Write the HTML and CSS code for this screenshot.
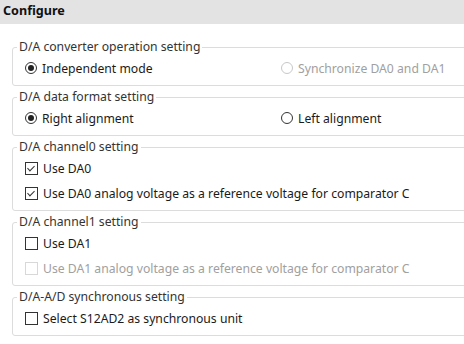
FILE: index.html
```html
<!DOCTYPE html>
<html lang="en">
<head>
    <meta charset="UTF-8">
    <title>Configure</title>
    <link rel="stylesheet" href="styles.css">
</head>
<body>

<div class="header">Configure</div>

<div class="content">
    <fieldset class="group">
        <legend>D/A converter operation setting</legend>
        <div class="row two">
            <label class="opt"><span class="radio checked"></span>Independent mode</label>
            <label class="opt disabled"><span class="radio"></span>Synchronize DA0 and DA1</label>
        </div>
    </fieldset>

    <fieldset class="group">
        <legend>D/A data format setting</legend>
        <div class="row two">
            <label class="opt"><span class="radio checked"></span>Right alignment</label>
            <label class="opt"><span class="radio"></span>Left alignment</label>
        </div>
    </fieldset>

    <fieldset class="group">
        <legend>D/A channel0 setting</legend>
        <div class="row">
            <label class="opt"><span class="check checked"></span>Use DA0</label>
        </div>
        <div class="row">
            <label class="opt"><span class="check checked"></span>Use DA0 analog voltage as a reference voltage for comparator C</label>
        </div>
    </fieldset>

    <fieldset class="group">
        <legend>D/A channel1 setting</legend>
        <div class="row">
            <label class="opt"><span class="check"></span>Use DA1</label>
        </div>
        <div class="row">
            <label class="opt disabled"><span class="check"></span>Use DA1 analog voltage as a reference voltage for comparator C</label>
        </div>
    </fieldset>

    <fieldset class="group">
        <legend>D/A-A/D synchronous setting</legend>
        <div class="row">
            <label class="opt"><span class="check"></span>Select S12AD2 as synchronous unit</label>
        </div>
    </fieldset>
</div>

</body>
</html>
```

FILE: styles.css
```css
body {
    margin: 0;
    font-family: "Noto Sans", "Open Sans", sans-serif;
    font-size: 12.2px;
    color: #1a1a1a;
    background-color: #fff;
    overflow: hidden;
}
.header {
    height: 24px;
    line-height: 22px;
    padding-left: 3px;
    background-color: #e3e3e3;
    font-size: 12.6px;
    font-weight: bold;
    color: #111;
}
.content {
    padding: 15px 0 0 12px;
    width: 470px;
}
.group {
    margin: 3px 0 0 0;
    padding: 1px 0 5px 4px;
    border: 1px solid #dcdcdc;
    border-radius: 3px;
}
.group:first-child {
    margin-top: 0;
}
.group legend {
    padding: 0 2px;
    line-height: 16px;
    color: #333;
}
.row {
    height: 24px;
    display: flex;
    align-items: center;
    padding-left: 8px;
}
.row + .row {
    margin-top: 1px;
}
.row.two {
    display: grid;
    grid-template-columns: 256px auto;
    align-items: center;
}
.opt {
    display: flex;
    align-items: center;
    gap: 5px;
    white-space: nowrap;
}
.opt.disabled {
    color: #a0a0a0;
}
.radio {
    width: 10px;
    height: 10px;
    border: 1px solid #333;
    border-radius: 50%;
    position: relative;
    flex: none;
}
.radio.checked::after {
    content: "";
    position: absolute;
    left: 2px;
    top: 2px;
    width: 6px;
    height: 6px;
    border-radius: 50%;
    background-color: #222;
}
.disabled .radio {
    border-color: #c8c8c8;
}
.check {
    width: 11px;
    height: 11px;
    border: 1px solid #333;
    position: relative;
    flex: none;
}
.check.checked::after {
    content: "";
    position: absolute;
    left: 3px;
    top: 1px;
    width: 3px;
    height: 6px;
    border: solid #333;
    border-width: 0 1px 1px 0;
    transform: rotate(45deg);
}
.disabled .check {
    border-color: #d8d8d8;
}
```
